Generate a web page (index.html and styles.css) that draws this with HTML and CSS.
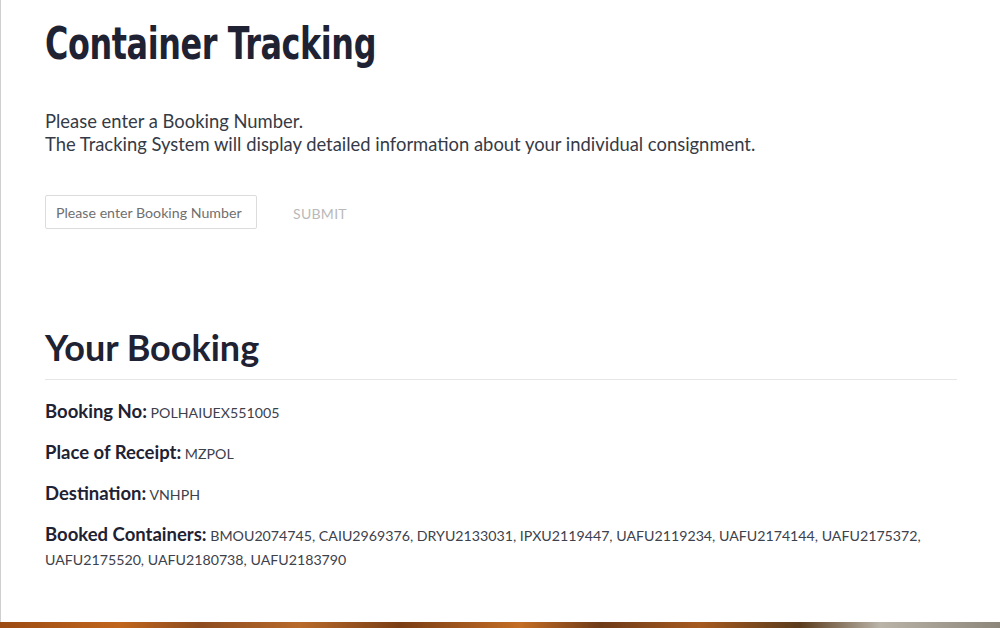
FILE: index.html
```html
<!DOCTYPE html>
<html lang="en">
<head>
	<meta charset="utf-8" />
	<title>Container Tracking</title>
	<link rel="stylesheet" href="styles.css">
</head>
<body>
<div class="page">
	<div class="content">
		<h1 class="title"><span>Container Tracking</span></h1>

		<p class="intro">
			Please enter a Booking Number.<br>
			The Tracking System will display detailed information about your individual consignment.
		</p>

		<form class="trackForm">
			<input type="text" class="bookingInput" placeholder="Please enter Booking Number">
			<button type="button" class="submitBtn">Submit</button>
		</form>

		<h2 class="bookingTitle">Your Booking</h2>

		<div class="bookingInfo">
			<p><b>Booking No:</b> POLHAIUEX551005</p>
			<p><b>Place of Receipt:</b> MZPOL</p>
			<p><b>Destination:</b> VNHPH</p>
			<p><b>Booked Containers:</b> BMOU2074745, CAIU2969376, DRYU2133031, IPXU2119447, UAFU2119234, UAFU2174144, UAFU2175372, UAFU2175520, UAFU2180738, UAFU2183790</p>
		</div>
	</div>
</div>
<div class="photoStrip"></div>
</body>
</html>
```
FILE: styles.css
```css
html, body{
	margin:0;
	padding:0;
	background:#fff;
}

body{
	font-family: Lato, "Open Sans", sans-serif;
	color:#353a46;
}

.page{
	height:622px;
	border-left:1px solid #cfcfcf;
	box-sizing:border-box;
	overflow:hidden;
}

.content{
	width:912px;
	padding:18px 0 0 44px;
}

/* condensed headline font isn't available, squeeze DejaVu a bit */
.title{
	margin:0;
	font-family: "DejaVu Sans Condensed", "DejaVu Sans", sans-serif;
	font-weight:bold;
	font-size:44px;
	line-height:52px;
	color:#1e2233;
	letter-spacing:-0.5px;
}

.title span{
	display:inline-block;
	transform:scaleX(0.805);
	transform-origin:left center;
}

.intro{
	margin:40px 0 0;
	font-size:18.4px;
	line-height:23px;
}

.trackForm{
	display:flex;
	align-items:center;
	gap:24px;
	margin-top:39px;
}

.bookingInput{
	width:212px;
	height:34px;
	box-sizing:border-box;
	border:1px solid #dcdcdc;
	border-radius:2px;
	padding:0 10px;
	font-family: Lato, sans-serif;
	font-size:14.2px;
	color:#555;
}

.bookingInput::placeholder{
	color:#6f6f6f;
}

.submitBtn{
	background:none;
	border:none;
	padding:3px 12px 0;
	font-family: Lato, sans-serif;
	font-size:14px;
	text-transform:uppercase;
	letter-spacing:0.3px;
	color:#b9b9b9;
}

.bookingTitle{
	margin:96px 0 0;
	padding-bottom:10px;
	border-bottom:1px solid #e6e6e6;
	font-size:36px;
	line-height:44px;
	font-weight:bold;
	color:#1e2233;
}

.bookingInfo p{
	margin:21px 0 0;
	font-size:14.2px;
	line-height:24px;
	color:#3d414b;
}

.bookingInfo p + p{
	margin-top:17px;
}

.bookingInfo b{
	font-size:18.5px;
	line-height:1;
	color:#1e2233;
}

.photoStrip{
	height:6px;
	background:linear-gradient(90deg, #9c4a12 0%, #c0651c 12%, #8d4b1e 20%, #b86a2a 30%, #7a3d14 40%, #c46d24 52%, #6e3a17 60%, #a65a1f 70%, #5a3b1c 80%, #b9b3a8 88%, #8c857a 100%);
}
```
